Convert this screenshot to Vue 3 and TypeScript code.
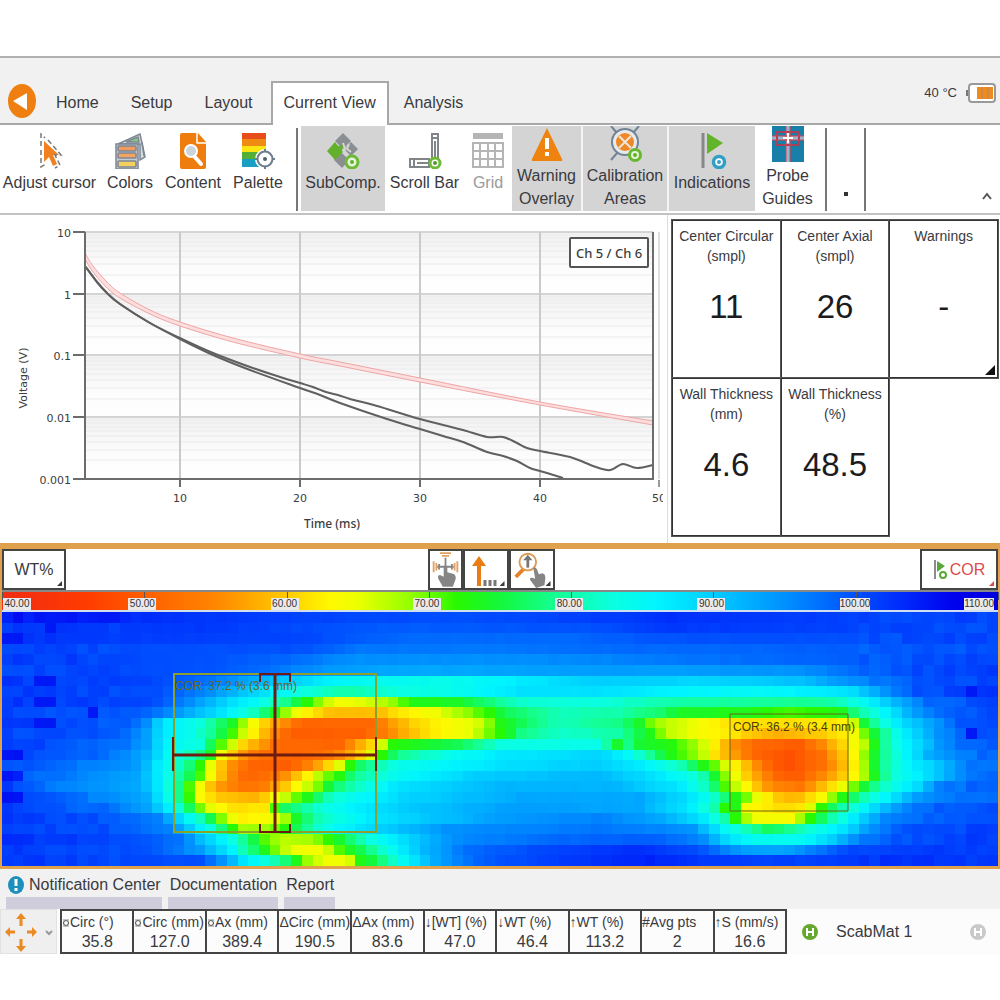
<script setup lang="ts">
type Point = [number, number]

interface RibbonItem {
  label: string[]
  icon: string
  width: number
  active?: boolean
  disabled?: boolean
  dividerBefore?: boolean
}

const tabs = ['Home', 'Setup', 'Layout', 'Current View', 'Analysis']

const ribbon: RibbonItem[] = [
  { label: ['Adjust cursor'], icon: 'cursor', width: 99 },
  { label: ['Colors'], icon: 'colors', width: 62 },
  { label: ['Content'], icon: 'content', width: 64 },
  { label: ['Palette'], icon: 'palette', width: 66 },
  { label: ['SubComp.'], icon: 'subcomp', width: 84, active: true, dividerBefore: true },
  { label: ['Scroll Bar'], icon: 'scroll', width: 79 },
  { label: ['Grid'], icon: 'grid', width: 48, disabled: true },
  { label: ['Warning', 'Overlay'], icon: 'warning', width: 69, active: true },
  { label: ['Calibration', 'Areas'], icon: 'calibration', width: 86, active: true },
  { label: ['Indications'], icon: 'indications', width: 88, active: true },
  { label: ['Probe', 'Guides'], icon: 'probe', width: 65 },
]

const readouts = [
  { title: 'Center Circular', unit: '(smpl)', value: '11' },
  { title: 'Center Axial', unit: '(smpl)', value: '26' },
  { title: 'Warnings', unit: '', value: '-' },
  { title: 'Wall Thickness', unit: '(mm)', value: '4.6' },
  { title: 'Wall Thickness', unit: '(%)', value: '48.5' },
]

const measures = [
  { ring: true, name: 'Circ (°)', value: '35.8' },
  { ring: true, name: 'Circ (mm)', value: '127.0' },
  { ring: true, name: 'Ax (mm)', value: '389.4' },
  { name: 'ΔCirc (mm)', value: '190.5' },
  { name: 'ΔAx (mm)', value: '83.6' },
  { name: '↓[WT] (%)', value: '47.0' },
  { name: '↓WT (%)', value: '46.4' },
  { name: '↑WT (%)', value: '113.2' },
  { name: '#Avg pts', value: '2' },
  { name: '↑S (mm/s)', value: '16.6' },
]

/* ---- decay plot ---- */
const decades = ['10', '1', '0.1', '0.01', '0.001'].map((label, i) => ({ label, y: [16, 78, 139, 201, 263][i] }))
const minorLines = [0, 1, 2, 3].flatMap((d) =>
  [2, 3, 4, 5, 6, 7, 8, 9].map((n) => Math.round(16 + 61.75 * (d + 1 - Math.log10(n)))),
)
const timeTicks = [10, 20, 30, 40].map((t) => ({ t, x: 180 + (t - 10) * 12 }))

function smooth(p: Point[], move = true): string {
  let d = `${move ? 'M' : 'L'}${p[0][0]} ${p[0][1]}`
  for (let i = 0; i < p.length - 1; i++) {
    const a = p[Math.max(0, i - 1)]
    const b = p[i]
    const c = p[i + 1]
    const e = p[Math.min(p.length - 1, i + 2)]
    d += `C${b[0] + (c[0] - a[0]) / 6} ${b[1] + (c[1] - a[1]) / 6} ${c[0] - (e[0] - b[0]) / 6} ${c[1] - (e[1] - b[1]) / 6} ${c[0]} ${c[1]}`
  }
  return d
}

const refHigh: Point[] = [[85, 37], [93, 50], [107, 66], [120, 77], [150, 94], [180, 106], [233, 122], [300, 138], [340, 146], [420, 162], [540, 186], [653, 205]]
const refLow: Point[] = [[85, 43], [93, 56], [106, 71], [120, 82], [150, 98], [180, 110], [233, 126], [300, 142], [340, 150], [420, 166], [540, 189], [653, 209]]
const channelHigh: Point[] = [[85, 50], [97, 66], [107, 77], [120, 88], [150, 107], [180, 122], [213, 137], [250, 151], [280, 161], [300, 167], [313, 171], [326, 176], [338, 179], [350, 183], [370, 188], [387, 193], [403, 198], [420, 203], [443, 209], [463, 214], [487, 221], [503, 221], [517, 227], [527, 232], [540, 235], [570, 241], [593, 250], [607, 254], [613, 253], [623, 248], [637, 252], [653, 249]]
const channelLow: Point[] = [[85, 50], [97, 66], [107, 77], [120, 88], [150, 107], [180, 123], [213, 139], [250, 154], [300, 172], [320, 179], [340, 187], [387, 203], [420, 213], [443, 220], [463, 226], [487, 236], [503, 240], [517, 245], [530, 252], [547, 257], [563, 262]]

/* ---- wall thickness map ---- */
const scaleStops: [number, number[]][] = [
  [40, [240, 44, 20]], [46, [255, 60, 0]], [50, [255, 94, 0]], [55, [255, 134, 0]], [60, [255, 203, 0]],
  [63, [255, 248, 0]], [65, [236, 255, 0]], [69, [140, 255, 0]], [72, [40, 248, 0]], [75, [20, 248, 60]],
  [79, [20, 255, 150]], [83, [10, 255, 225]], [86, [0, 245, 255]], [90, [0, 205, 255]], [95, [0, 144, 255]],
  [100, [0, 80, 255]], [104, [0, 34, 250]], [107, [0, 0, 238]], [110, [0, 0, 220]],
]

function colorOf(v: number): string {
  for (let i = 1; i < scaleStops.length; i++) {
    const [hi, b] = scaleStops[i]
    if (v <= hi) {
      const [lo, a] = scaleStops[i - 1]
      const t = Math.max(0, (v - lo) / (hi - lo))
      return `rgb(${a.map((c, k) => Math.round(c + (b[k] - c) * t)).join(',')})`
    }
  }
  return 'rgb(0,0,220)'
}

const scaleGradient = `linear-gradient(to right, ${scaleStops
  .map(([v]) => `${colorOf(v)} ${(((v - 40) / 70) * 100).toFixed(1)}%`)
  .join(', ')})`

const scaleLabels = [40, 50, 60, 70, 80, 90, 100, 110].map((v) => ({
  text: v.toFixed(2),
  left: Math.min(96.6, Math.max(0.1, ((v - 40) / 70) * 100 - 1.6)),
  tick: ((v - 40) / 70) * 100,
}))

// One string per scan line: "position:thickness" pairs, values between them are interpolated.
const scanLines = [
  '0:105 100:105 130:103 330:101 450:100 630:102 660:103 900:101 1000:101',
  '0:102 200:102 400:99 600:100 660:102 900:101 1000:100',
  '0:104 50:102 300:101 400:98 560:98 620:99 700:100 850:100 1000:101',
  '0:101 250:100 300:100 360:97 500:97 620:98 700:98 1000:100',
  '0:102 200:100 290:98 350:95 500:95 620:96 680:97 850:99 1000:101',
  '0:101 200:100 260:98 330:94 400:93 600:94 700:94 800:95 900:100 1000:102',
  '0:102 150:101 210:97 260:92 310:88 345:85 450:84 550:88 600:90 700:89 800:91 860:96 900:99 1000:101',
  '0:102 160:100 200:96 250:90 290:84 320:82 345:80 400:83 450:84 520:88 600:88 680:86 760:85 850:88 880:94 920:100 1000:102',
  '0:102 150:101 190:95 220:90 260:84 285:79 300:74 315:70 335:64 370:66 395:69 410:73 460:74 490:78 520:82 600:83 670:80 800:79 830:80 860:84 890:91 930:98 1000:101',
  '0:101 140:99 180:94 220:88 250:82 275:74 290:66 310:62 330:59 380:59 400:62 430:64 460:68 490:72 505:76 560:81 620:80 660:77 680:74 760:73 790:71 840:73 860:80 880:84 910:93 940:98 1000:101',
  '0:102 130:99 150:94 163:87 200:83 220:77 235:73 250:65 265:60 285:55 300:51 370:51 390:56 410:60 440:63 480:66 492:70 500:73 520:76 560:81 620:78 640:74 655:68 680:66 710:63 740:61 840:62 855:67 862:74 880:82 900:88 940:95 960:100 1000:100',
  '0:101 120:99 145:94 163:87 190:84 215:78 230:72 245:66 260:60 275:55 290:50 360:50 385:54 405:58 430:62 470:65 490:70 505:73 520:78 560:82 620:80 640:75 655:72 665:67 700:64 730:62 760:59 780:58 820:60 850:63 865:70 878:77 900:85 930:93 970:101 1000:99',
  '0:102 120:98 150:93 163:86 200:83 215:73 230:67 245:60 260:57 280:51 340:51 355:57 370:60 382:66 390:72 420:74 460:76 500:83 600:84 616:74 630:79 640:74 670:73 700:67 720:60 740:54 760:51 800:50 825:56 850:63 865:67 875:74 890:82 910:87 950:97 1000:99',
  '0:106 20:105 24:100 100:99 150:92 165:85 195:80 210:74 222:64 240:57 260:52 300:51 330:53 350:58 365:62 375:68 385:74 400:79 450:84 500:87 600:89 630:85 660:76 675:72 700:68 715:61 730:58 755:51 790:48 820:52 840:59 855:64 870:72 880:78 900:84 930:93 980:98 1000:98',
  '0:100 60:98 140:94 160:86 185:80 200:72 215:62 230:56 250:51 285:50 300:52 320:58 335:63 345:70 360:77 400:84 500:88 600:90 640:87 680:81 700:74 715:70 730:64 750:58 770:50 790:48 820:52 840:58 860:65 873:74 885:80 910:86 930:89 970:97 1000:98',
  '0:105 20:105 24:99 60:97 140:93 160:86 180:79 197:73 208:65 225:57 245:51 270:52 290:57 305:62 320:68 340:73 355:79 400:85 480:90 600:92 650:88 700:82 715:74 728:68 740:62 760:56 780:50 800:50 830:57 850:62 865:68 875:74 890:82 920:87 970:97 1000:98',
  '0:102 60:96 140:93 160:86 180:78 190:70 200:64 215:57 240:53 260:53 285:60 305:66 320:70 330:76 360:82 400:88 500:92 620:92 680:87 710:80 720:73 735:67 750:62 770:55 800:53 830:61 845:66 860:73 880:81 920:89 935:96 1000:100',
  '0:105 20:105 24:100 80:97 145:93 165:85 185:75 198:64 215:60 250:58 265:60 275:64 295:70 310:74 330:82 400:89 520:93 640:93 690:88 720:80 735:73 745:70 760:64 780:59 800:59 820:63 835:70 845:74 860:80 890:87 920:95 1000:99',
  '0:102 100:98 150:93 175:84 190:76 200:70 213:64 235:61 265:62 280:76 300:79 330:84 400:90 520:94 640:93 690:87 715:80 725:72 735:73 745:64 780:61 800:62 815:67 822:73 840:80 860:84 880:91 920:98 1000:101',
  '0:102 100:100 160:96 180:88 200:81 215:73 225:67 240:62 270:64 285:68 298:75 320:81 380:88 500:94 600:96 660:93 700:88 725:80 733:73 745:68 760:64 790:64 805:70 815:74 825:78 850:86 870:92 890:97 1000:101',
  '0:102 110:100 170:96 190:90 210:83 225:76 240:68 270:68 290:74 320:83 360:88 450:95 600:97 690:95 730:84 750:80 770:76 790:79 820:84 840:87 870:95 900:100 1000:101',
  '0:103 140:100 180:97 210:89 230:84 250:77 262:71 285:67 310:68 330:72 345:76 370:83 400:88 450:95 550:98 650:99 700:96 730:88 760:84 800:85 830:89 860:97 900:100 1000:102',
  '0:102 150:100 200:94 230:87 250:78 275:70 290:65 315:64 330:67 345:73 360:76 390:84 420:91 470:98 550:101 640:103 700:100 740:94 780:93 810:96 850:101 1000:102',
  '0:102 200:100 225:94 245:87 270:82 290:76 310:67 330:64 350:66 360:73 375:76 400:84 430:92 480:99 560:102 650:104 700:102 800:101 900:103 1000:102',
].map((line) => line.split(' ').map((pair) => pair.split(':').map(Number) as Point))

const MAP_W = 996
const MAP_H = 254
const COLS = 93
const ROWS = scanLines.length
const darkSpots = new Set(['4,1', '3,6', '4,6', '8,9', '3,10', '4,10', '0,2', '1,2', '3,8', '4,8', '90,7', '90,11'])

function thickness(row: number, x: number): number {
  const line = scanLines[row]
  for (let i = 1; i < line.length; i++) {
    if (x <= line[i][0]) {
      const [x0, v0] = line[i - 1]
      const [x1, v1] = line[i]
      return v0 + ((v1 - v0) * (x - x0)) / (x1 - x0)
    }
  }
  return line[line.length - 1][1]
}

function grain(col: number, row: number): number {
  const n = Math.sin(col * 12.9898 + row * 78.233) * 43758.5453
  return n - Math.floor(n) - 0.5
}

const cells = scanLines.flatMap((_, row) =>
  Array.from({ length: COLS }, (_unused, col) => {
    const x = Math.round((col * MAP_W) / COLS)
    const y = Math.round((row * MAP_H) / ROWS)
    let v = thickness(row, x + 7)
    const edge = col < 11 || col > 79
    v += grain(col, row) * (edge && v > 96 ? 2 : 0.5)
    if (darkSpots.has(`${col},${row}`)) v = 105
    return {
      key: `${col},${row}`,
      x,
      y,
      w: Math.round(((col + 1) * MAP_W) / COLS) - x,
      h: Math.round(((row + 1) * MAP_H) / ROWS) - y,
      fill: colorOf(v),
    }
  }),
)
</script>

<template>
  <main class="app">
    <header class="top">
      <button class="back" type="button" aria-label="Back">
        <svg viewBox="0 0 30 36" width="30" height="36">
          <ellipse cx="15" cy="18" rx="14" ry="17" fill="#ee7f10" />
          <path d="M6 18 20 10v17z" fill="#fff" />
        </svg>
      </button>
      <nav class="tabs">
        <a v-for="t in tabs" :key="t" href="#" class="tab" :class="{ current: t === 'Current View' }">{{ t }}</a>
      </nav>
      <div class="status">
        <span>40 °C</span>
        <svg viewBox="0 0 30 22" width="30" height="22">
          <rect x="3" y="2" width="26" height="18" rx="3" fill="#fff" stroke="#999" stroke-width="2" />
          <path d="M1 8v6" stroke="#777" stroke-width="2" />
          <path d="M13 5v12M19 5v12M25 5v12" stroke="#f08a1c" stroke-width="4" />
          <path d="M16 5v12M22 5v12" stroke="#c98a48" stroke-width="2" />
        </svg>
      </div>
    </header>

    <section class="ribbon">
      <template v-for="item in ribbon" :key="item.icon">
        <span v-if="item.dividerBefore" class="divider"></span>
        <button
          type="button"
          class="tool"
          :class="{ active: item.active, two: item.label.length > 1 }"
          :disabled="item.disabled"
          :style="{ width: item.width + 'px' }"
        >
          <svg v-if="item.icon === 'cursor'" viewBox="0 0 36 36" width="36" height="36">
            <path d="M12 8v21l5-5 4 9 4-2-4-9h6z" fill="#f08020" />
            <path d="M9 13V1l4 4M16 7l13 15h-6l5 10-5 3M9 17v17l5-3" fill="none" stroke="#777" stroke-width="1.500" stroke-dasharray="5 3" />
          </svg>
          <svg v-else-if="item.icon === 'colors'" viewBox="0 0 36 36" width="36" height="36">
            <g stroke="#7d8794" stroke-width="1.500">
              <path d="M6 11 28 1l5 23-5 3V11z" fill="#d4dfdf" />
              <path d="M14 9l12-5 1 5z" fill="#84cf78" />
              <path d="M30 9l2 14" />
              <path d="M4 11h22v25H4z" fill="#c3ccd4" />
              <rect x="6" y="13" width="18" height="5" rx="1" fill="#f39a60" />
              <rect x="6" y="20" width="18" height="5" rx="1" fill="#f3a460" />
              <rect x="6" y="28" width="18" height="6" rx="1" fill="#f4cf62" />
            </g>
          </svg>
          <svg v-else-if="item.icon === 'content'" viewBox="0 0 36 36" width="36" height="36">
            <path d="M5 0h18l8 9v25q0 2-2 2H7q-2 0-2-2V2q0-2 2-2z" fill="#ee7d0e" />
            <path d="M22 0v10h9" fill="none" stroke="#fff" stroke-width="1.500" />
            <path d="m19 23 7 8" stroke="#fff" stroke-width="4" stroke-linecap="round" />
            <circle cx="16" cy="18" r="6" fill="#c9d4dc" stroke="#fff" stroke-width="2" />
          </svg>
          <svg v-else-if="item.icon === 'palette'" viewBox="0 0 36 36" width="36" height="36">
            <path d="M2 0h24v7H2z" fill="#e84e1c" />
            <path d="M2 6h24v8H2z" fill="#ef8a12" />
            <path d="M2 13h24v7H2z" fill="#fce510" />
            <path d="M2 19h19v8H2z" fill="#55ae35" />
            <path d="M2 26h19v8H2z" fill="#18a0c4" />
            <circle cx="25" cy="26" r="10" fill="#fff" />
            <circle cx="25" cy="26" r="7.500" fill="#fff" stroke="#6d7d8c" stroke-width="2" />
            <circle cx="25" cy="26" r="2" fill="#52606c" />
            <path d="M25 16v3M25 33v3M15 26h3M32 26h3" stroke="#6d7d8c" stroke-width="2" />
          </svg>
          <svg v-else-if="item.icon === 'subcomp'" viewBox="0 0 36 36" width="36" height="36">
            <path d="m18 0 8 8-8 8-8-8zM26 9l7 7-7 7-7-7zM16 19l8 8-7 8-8-8z" fill="#8b8f92" />
            <path d="M18 10l2 6-2 4" stroke="#d5d5d5" stroke-width="2" fill="none" />
            <path d="m10 9 3 4 5-1-1 6 1 1-4 4-4 4-8-9z" fill="#62b02c" />
            <path d="m24 11-2 5 4 3" fill="none" stroke="#d5d5d5" stroke-width="2" />
            <circle cx="27" cy="29" r="6" fill="#e8f5dc" stroke="#6cba35" stroke-width="3" />
            <circle cx="27" cy="29" r="2" fill="#62b02c" />
          </svg>
          <svg v-else-if="item.icon === 'scroll'" viewBox="0 0 36 36" width="36" height="36">
            <path d="M25 1h6v24h-6zM3 26h19v8H3z" fill="#fff" stroke="#818488" stroke-width="2" />
            <path d="M25 5h6M7 26v8M10 30h12M28 8v16" stroke="#818488" stroke-width="2" />
            <circle cx="28" cy="30" r="5" fill="#fff" stroke="#6cba35" stroke-width="3" />
            <circle cx="28" cy="30" r="2" fill="#52962b" />
          </svg>
          <svg v-else-if="item.icon === 'grid'" viewBox="0 0 36 36" width="36" height="36">
            <path d="M3 0h30v6H3z" fill="#b5b5b5" />
            <path d="M3 10h30v24H3zM3 18h30M3 26h30M10 10v24M18 10v24M25 10v24" fill="#fff" stroke="#b5b5b5" stroke-width="2" />
          </svg>
          <svg v-else-if="item.icon === 'warning'" viewBox="0 0 36 36" width="36" height="36">
            <path d="M18 2 33 33q1 2-1 2H4q-2 0-1-2z" fill="#ee830f" />
            <path d="M18 12v11M18 26v4" stroke="#fff" stroke-width="4" />
          </svg>
          <svg v-else-if="item.icon === 'calibration'" viewBox="0 0 36 36" width="36" height="36">
            <path d="m4 0 6 7M32 0l-6 7M4 34l7-8" stroke="#718397" stroke-width="2" />
            <circle cx="18" cy="16" r="13" fill="#e7e9ea" stroke="#718397" stroke-width="2" />
            <circle cx="18" cy="16" r="9" fill="#ee8928" />
            <path d="m12 10 12 12M24 10 12 22" stroke="#efe6da" stroke-width="2" />
            <circle cx="28" cy="29" r="5.500" fill="#e5f4d8" stroke="#67b82c" stroke-width="3" />
            <circle cx="28" cy="29" r="2" fill="#62b02c" />
          </svg>
          <svg v-else-if="item.icon === 'indications'" viewBox="0 0 36 36" width="36" height="36">
            <path d="M9 0v35" stroke="#85888b" stroke-width="3" />
            <path d="m13 0 16 10-16 11z" fill="#62b52a" />
            <circle cx="25" cy="29" r="5.500" fill="#fff" stroke="#329fc7" stroke-width="3.500" />
            <circle cx="25" cy="29" r="2" fill="#329fc7" />
          </svg>
          <svg v-else viewBox="0 0 36 36" width="36" height="36">
            <path d="M2 0h32v36H2z" fill="#187fa9" />
            <path d="M2 12h32M18 0v36" stroke="#8fb9d0" stroke-width="4" />
            <path d="M7 6h22v13H7z" fill="none" stroke="#a8405c" stroke-width="2" />
            <path d="M2 10h32M2 14h32M16 0v36M20 0v36" stroke="#ea3c48" stroke-width="1" />
            <path d="M13 12h10M18 7v10" stroke="#fff" stroke-width="2" />
          </svg>
          <span v-for="line in item.label" :key="line">{{ line }}</span>
        </button>
      </template>
      <button class="more" type="button" aria-label="More">
        <svg viewBox="0 0 4 4" width="4" height="4"><path d="M0 0h4v4H0z" fill="#333" /></svg>
      </button>
      <button class="collapse" type="button" aria-label="Collapse ribbon">
        <svg viewBox="0 0 12 10" width="12" height="10"><path d="m2 8 4-5 4 5" fill="none" stroke="#555" stroke-width="2" /></svg>
      </button>
    </section>

    <section class="upper">
      <svg class="plot" viewBox="0 -1 667 324">
        <defs>
          <linearGradient id="band" x1="0" y1="0" x2="0" y2="1">
            <stop offset="0" stop-color="#f1f1f1" />
            <stop offset="0.600" stop-color="#fcfcfc" />
            <stop offset="1" stop-color="#fff" />
          </linearGradient>
          <clipPath id="plot-edge"><path d="M0 0h663v324H0z" /></clipPath>
        </defs>
        <rect v-for="i in 4" :key="i" x="85" :y="decades[i - 1].y" width="568" height="62" fill="url(#band)" />
        <path v-for="y in minorLines" :key="y" :d="`M85 ${y}H653`" stroke="#ebebeb" />
        <path v-for="d in decades" :key="d.label" :d="`M85 ${d.y}H653`" stroke="#d4d4d4" stroke-width="2" />
        <path v-for="t in timeTicks" :key="t.t" :d="`M${t.x} 16V263`" stroke="#cacaca" stroke-width="2" />
        <path :d="smooth(refHigh) + smooth([...refLow].reverse(), false) + 'Z'" fill="#fbdedd" />
        <path :d="smooth(refHigh)" class="ref" />
        <path :d="smooth(refLow)" class="ref" />
        <path :d="smooth(channelHigh)" class="trace" />
        <path :d="smooth(channelLow)" class="trace" />
        <path d="M659 16V263" stroke="#dedede" stroke-width="2" />
        <path d="M85 16V263H653V16" fill="none" stroke="#6c6c6c" stroke-width="2" />
        <g v-for="d in decades" :key="d.label">
          <path :d="`M73 ${d.y}H85`" stroke="#6c6c6c" stroke-width="2" />
          <text x="71" :y="d.y + 5" text-anchor="end">{{ d.label }}</text>
        </g>
        <g v-for="t in timeTicks" :key="t.t">
          <path :d="`M${t.x} 263v8`" stroke="#6c6c6c" stroke-width="2" />
          <text :x="t.x" y="286" text-anchor="middle">{{ t.t }}</text>
        </g>
        <g clip-path="url(#plot-edge)">
          <path d="M659 264v7" stroke="#999" stroke-width="2" />
          <text x="652" y="286">50</text>
        </g>
        <text x="332" y="312" text-anchor="middle" class="axis">Time (ms)</text>
        <text transform="translate(27 162) rotate(-90)" text-anchor="middle">Voltage (V)</text>
        <rect x="570" y="22" width="78" height="29" rx="1" fill="#fff" stroke="#555" stroke-width="2" />
        <text x="609" y="42" text-anchor="middle" class="legend">Ch 5 / Ch 6</text>
      </svg>

      <div class="readouts">
        <article v-for="(r, i) in readouts" :key="i" class="readout">
          <h2>{{ r.title }}<br />{{ r.unit }}</h2>
          <strong>{{ r.value }}</strong>
          <i v-if="r.title === 'Warnings'" class="corner"></i>
        </article>
      </div>
    </section>

    <section class="scan">
      <div class="scan-bar">
        <button type="button" class="box wt">WT%<i class="corner"></i></button>
        <div class="scan-tools">
          <button type="button" class="box narrow" aria-label="Touch mode">
            <svg viewBox="0 0 34 40" width="31" height="37">
              <path d="M4 11v12M7 13v8M30 11v12M27 13v8M11 2h12M13 5h8" stroke="#e3a060" stroke-width="2" />
              <path d="M8 17h18M17 7v10M10 14v6M24 14v6" stroke="#858585" stroke-width="2" />
              <path d="M15 17q2-3 4 0v6l7 2q3 2 2 6l-3 8H14L9 30q-1-4 2-4l4 2z" fill="#858585" />
            </svg>
          </button>
          <button type="button" class="box" aria-label="Scan direction">
            <svg viewBox="0 0 40 37" width="40" height="37">
              <path d="M13 35V13" stroke="#ea7c14" stroke-width="4" />
              <path d="m6 15 7-10 7 10z" fill="#ea7c14" />
              <path d="M19 29v6M24 29v6M29 29v6" stroke="#777" stroke-width="3" />
            </svg>
            <i class="corner"></i>
          </button>
          <button type="button" class="box" aria-label="Zoom tool">
            <svg viewBox="0 0 42 40" width="39" height="37">
              <path d="m4 28 9-9" stroke="#e48128" stroke-width="4" />
              <circle cx="17" cy="12" r="9" fill="#fff" stroke="#df9850" stroke-width="2" />
              <path d="M17 18V8" stroke="#777" stroke-width="3" />
              <path d="m12 10 5-6 5 6z" fill="#777" />
              <path d="M23 19q2-3 4 1l2 5 4-1q3 1 3 5l-1 8-9 3-6-8q-2-4 2-3l3 1z" fill="#858585" />
            </svg>
            <i class="corner"></i>
          </button>
        </div>
        <button type="button" class="box cor">
          <svg viewBox="0 0 16 20" width="16" height="20">
            <path d="M2 0v19" stroke="#8c8c8c" stroke-width="2" />
            <path d="m4 1 8 5-8 6z" fill="#5aa83a" />
            <circle cx="10" cy="15" r="3" fill="#fff" stroke="#5aa83a" stroke-width="2" />
          </svg>
          COR<i class="corner"></i>
        </button>
      </div>
      <div class="scale" :style="{ background: scaleGradient }">
        <template v-for="l in scaleLabels" :key="l.text">
          <i class="tick" :style="{ left: l.tick + '%' }"></i>
          <span :style="{ left: l.left + '%' }">{{ l.text }}</span>
        </template>
      </div>
      <svg class="map" :viewBox="`0 0 ${MAP_W} ${MAP_H}`">
        <g shape-rendering="crispEdges">
          <rect v-for="c in cells" :key="c.key" :x="c.x" :y="c.y" :width="c.w" :height="c.h" :fill="c.fill" />
        </g>
        <path d="M172 62H374V220H172z" fill="none" stroke="#8ca12c" stroke-width="2" />
        <text x="173" y="78" class="tag-olive">COR: 37.2 % (3.6 mm)</text>
        <g fill="none" stroke="#6e1c10">
          <path d="M273 62V220" stroke-width="3" />
          <path d="M172 143H374" stroke-width="3" />
          <path d="M258 70V62H288V70M258 212V220H288V212M171 125V159M374 125V159" stroke-width="2" />
        </g>
        <path d="M728 102H846V199H728z" fill="none" stroke="#6b6414" />
        <text x="731" y="119" class="tag-dark">COR: 36.2 % (3.4 mm)</text>
      </svg>
    </section>

    <footer>
      <nav class="links">
        <a href="#">
          <svg viewBox="0 0 16 18" width="16" height="18">
            <ellipse cx="8" cy="9" rx="8" ry="9" fill="#1d8fbd" />
            <path d="M8 3v7M8 12v3" stroke="#fff" stroke-width="3" />
          </svg>
          Notification Center
        </a>
        <a href="#">Documentation</a>
        <a href="#">Report</a>
      </nav>
      <div class="bottom">
        <button type="button" class="move" aria-label="Move cursor">
          <svg viewBox="0 0 56 42" width="56" height="42">
            <g fill="none" stroke="#ea8a20" stroke-width="3">
              <path d="M20 15V5M20 28v10M14 21H7M26 21h8" />
            </g>
            <path d="m15 8 5-6 5 6zM15 35l5 6 5-6zM9 16l-5 5 5 5zM31 16l5 5-5 5z" fill="#ea8a20" />
            <path d="m45 20 3 3 3-3" fill="none" stroke="#999" stroke-width="2" />
          </svg>
        </button>
        <dl class="measures">
          <div v-for="(m, i) in measures" :key="i">
            <dt>
              <svg v-if="m.ring" viewBox="0 0 8 8" width="8" height="8">
                <circle cx="4" cy="4" r="2.500" fill="none" stroke="#444" />
                <path d="M1 1h6M1 7h6" stroke="#888" />
              </svg>
              {{ m.name }}
            </dt>
            <dd>{{ m.value }}</dd>
          </div>
        </dl>
        <div class="scanner">
          <svg viewBox="0 0 18 18" width="18" height="18">
            <circle cx="9" cy="9" r="8" fill="#65a82d" />
            <path d="M6 5v8M12 5v8M6 9h6" stroke="#fff" stroke-width="2" />
          </svg>
          <span>ScabMat 1</span>
          <svg viewBox="0 0 18 18" width="18" height="18">
            <circle cx="9" cy="9" r="8" fill="#c9c9c9" />
            <path d="M6 5v8M12 5v8M6 9h6" stroke="#fff" stroke-width="2" />
          </svg>
        </div>
      </div>
    </footer>
  </main>
</template>

<style>
body {
  margin: 0;
  background: #fff;
}
</style>

<style scoped>
* {
  box-sizing: border-box;
}

.app {
  padding: 56px 0 46px;
  background: #fff;
  color: #3a3a3e;
  font: 16px/23px "Liberation Sans", Arial, sans-serif;
}

button {
  margin: 0;
  padding: 0;
  border: 0;
  background: none;
  color: inherit;
  font: inherit;
}

svg {
  display: block;
  flex: none;
}

a {
  color: inherit;
  text-decoration: none;
}

.top {
  display: flex;
  align-items: flex-end;
  height: 69px;
  border-top: 2px solid #b0b0b0;
  background: #f1f1f1;
  box-shadow: inset 0 -2px #a8a8a8;
}

.back {
  align-self: center;
  padding: 18px 4px 0 7px;
}

.tabs {
  display: flex;
  flex: 1;
  align-items: flex-end;
}

.tab {
  height: 44px;
  padding: 0 15px;
  line-height: 44px;
}

.tab:nth-child(2) {
  margin-left: 2px;
}

.tab:nth-child(3) {
  margin-left: 2px;
}

.tab.current {
  margin-left: 3px;
  padding: 0 11px;
  border: solid #a8a8a8;
  border-width: 2px 2px 0;
  background: #fff;
  line-height: 40px;
}

.status {
  display: flex;
  align-items: center;
  align-self: flex-start;
  gap: 9px;
  padding: 23px 4px 0 0;
  font-size: 13px;
}

.ribbon {
  display: flex;
  height: 90px;
  padding: 1px 0 2px;
  border-bottom: 2px solid #c2c2c2;
  background: #fff;
}

.divider {
  width: 2px;
  margin: 2px 3px 0 5px;
  background: #777;
}

.tool {
  display: flex;
  flex: none;
  flex-direction: column;
  align-items: center;
  padding-top: 7px;
  white-space: nowrap;
}

.tool.two {
  padding-top: 0;
}

.tool svg {
  margin-bottom: 2px;
}

.tool.active {
  background: #d4d4d4;
}

.tool.active + .tool.active {
  border-left: 2px solid #f4f4f4;
}

.tool:disabled {
  color: #999;
}

.more {
  display: flex;
  align-items: flex-end;
  justify-content: center;
  width: 41px;
  margin: 2px 0 0 5px;
  padding-bottom: 15px;
  border: solid #777;
  border-width: 0 2px;
}

.collapse {
  height: 10px;
  margin: 65px 7px 0 auto;
}

.upper {
  display: grid;
  grid-template-columns: 667fr 333fr;
  min-height: 328px;
}

.plot {
  width: 100%;
  height: auto;
  font: 11px "DejaVu Sans", Verdana, sans-serif;
}

.plot text {
  fill: #3c3c3c;
}

.plot .axis {
  font: 500 12px "Noto Sans", "Open Sans", sans-serif;
}

.plot .legend {
  font: 500 13px "Noto Sans", "Open Sans", sans-serif;
}

.ref {
  fill: none;
  stroke: #efa5a5;
  stroke-width: 1;
}

.trace {
  fill: none;
  stroke: #606060;
  stroke-width: 2;
}

.readouts {
  display: grid;
  grid-template-columns: repeat(3, 1fr);
  grid-auto-rows: 158px;
  padding: 5px 2px 0 4px;
  border-left: 1px solid #ddd;
}

.readout {
  position: relative;
  border: 1px solid #333;
  box-shadow: 0 0 0 1px #555;
  text-align: center;
}

.readout h2 {
  height: 40px;
  margin: 5px 0 0;
  font-size: 14px;
  font-weight: 400;
  line-height: 20px;
}

.readout strong {
  display: block;
  margin-top: 20px;
  color: #1c1c1e;
  font-size: 33px;
  font-weight: 400;
  line-height: 42px;
}

.corner {
  position: absolute;
  right: 2px;
  bottom: 2px;
  width: 5px;
  height: 5px;
  background: currentColor;
  clip-path: polygon(100% 0, 100% 100%, 0 100%);
}

.readout .corner {
  width: 10px;
  height: 10px;
  background: #111;
}

.scan {
  border: solid #dfa14b;
  border-width: 6px 2px 3px;
}

.scan-bar {
  display: flex;
  justify-content: space-between;
  height: 43px;
  border-bottom: 2px solid #888;
}

.box {
  position: relative;
  display: flex;
  align-items: center;
  justify-content: center;
  width: 46px;
  height: 41px;
  border: 2px solid #444;
  background: #fff;
}

.wt {
  width: 64px;
}

.scan-tools {
  display: flex;
  margin-right: 4px;
}

.box.narrow {
  width: 35px;
}

.cor {
  gap: 1px;
  width: 78px;
  color: #dd4b4b;
}

.scale {
  position: relative;
  height: 20px;
  border-bottom: 2px solid #cfdff0;
}

.scale span {
  position: absolute;
  top: 6px;
  min-width: 28px;
  background: #ece9ea;
  color: #333;
  font-size: 10px;
  line-height: 12px;
  text-align: center;
}

.tick {
  position: absolute;
  top: 0;
  width: 1px;
  height: 8px;
  background: #555;
}

.map {
  width: 100%;
  height: auto;
  font: 12px "Liberation Sans", Arial, sans-serif;
}

.tag-olive {
  fill: #66681c;
}

.tag-dark {
  fill: #4a3d08;
}

footer {
  background: #f1f1f1;
}

.links {
  display: flex;
  gap: 6px;
  height: 40px;
  padding: 4px 6px 0;
}

.links a {
  display: flex;
  align-items: center;
  gap: 5px;
  height: 36px;
  padding: 0 1px 0 2px;
  border-bottom: 12px solid #cfcddc;
  line-height: 24px;
}

.bottom {
  display: flex;
  height: 45px;
  background: #fcfcfc;
}

.move {
  width: 57px;
  border: 1px solid #e2e2e2;
  background: #efefef;
}

.measures {
  display: grid;
  flex: 0 1 727px;
  grid-template-columns: repeat(10, 1fr);
  margin: 0 0 0 3px;
  border: 1px solid #444;
}

.measures div {
  padding-top: 2px;
  border: 1px solid #444;
  white-space: nowrap;
}

.measures dt {
  display: flex;
  align-items: center;
  height: 19px;
  font-size: 14px;
  line-height: 19px;
}

.measures dd {
  margin: 0;
  text-align: center;
  line-height: 20px;
}

.scanner {
  display: flex;
  flex: 1;
  align-items: center;
  padding: 0 13px 0 14px;
}

.scanner span {
  flex: 1;
  padding-left: 17px;
}
</style>
